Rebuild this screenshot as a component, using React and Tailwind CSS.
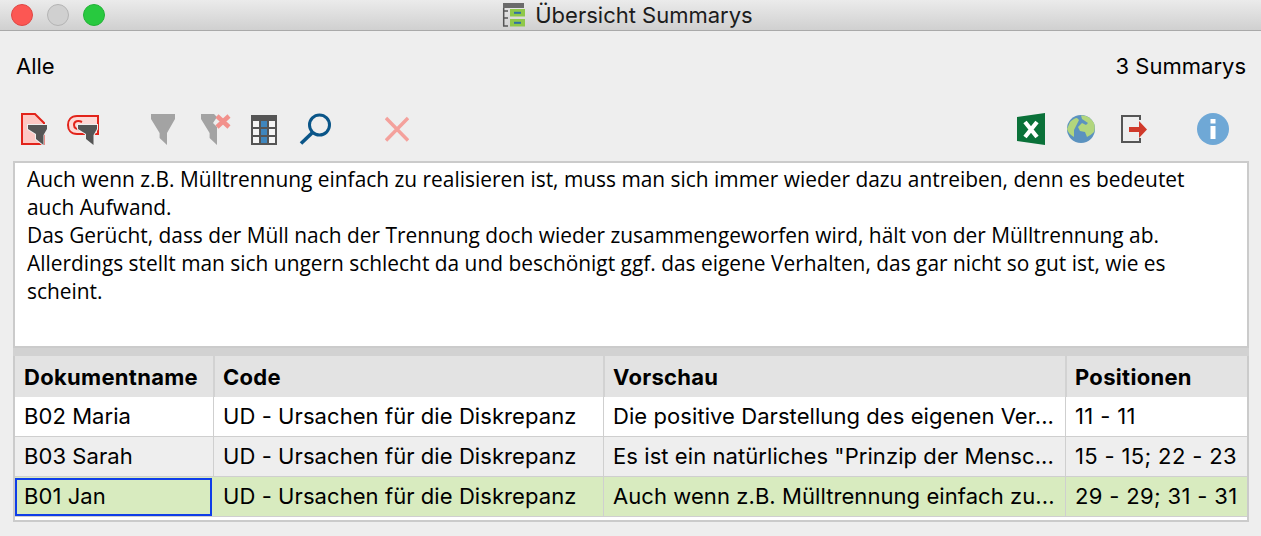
const FUNNEL = "M7 12H26V16L22.5 22V32L15 26V21L7 16Z";

const DocFilter = () => (
  <svg width="26" height="32" viewBox="0 0 26 32" className="ml-[21px]">
    <path d="M1 1H14L23 10V31H1Z" fill="#fcc8c4" stroke="#e2231a" strokeWidth="2" />
    <path d={FUNNEL} fill="#555" stroke="#efefef" strokeWidth="2" paintOrder="stroke" />
  </svg>
);

const MemoFilter = () => (
  <svg width="32" height="32" viewBox="0 0 32 32" className="ml-[20px]">
    <path d="M10 3H31V21H10C4 21 1 17 1 12C1 7 4 3 10 3Z" fill="#fdd9d6" stroke="#e2231a" strokeWidth="2" />
    <path d="M15 9C11 7 7 8 7 12C7 15 10 17 14 16" fill="none" stroke="#e2231a" strokeWidth="2" />
    <g transform="translate(4 0)">
      <path d={FUNNEL} fill="#555" stroke="#efefef" strokeWidth="2" paintOrder="stroke" />
    </g>
  </svg>
);

const GrayFunnel = () => (
  <svg width="24" height="32" viewBox="0 0 24 32" className="ml-[52px]">
    <path d="M0 1H24V6L16 20V32L8.6 25V20L0 6Z" fill="#a3a3a3" />
  </svg>
);

const GrayFunnelX = () => (
  <svg width="30" height="32" viewBox="0 0 30 32" className="ml-[26px]">
    <path d="M0 1H13L16 4L12 10L16 14V32L8.6 25V20L0 6Z" fill="#a3a3a3" />
    <path d="M16 3L28 14M28 3L16 14" stroke="#f2918c" strokeWidth="4.5" />
  </svg>
);

const TableIcon = () => (
  <svg width="26" height="32" viewBox="0 0 26 32" className="ml-[20px]">
    <rect y="2" width="26" height="30" fill="#555" />
    {[8, 16, 24].map((y) => (
      <g key={y}>
        <rect x="2" y={y} width="6" height="6" fill="#f5f5f5" />
        <rect x="10" y={y} width="6" height="6" fill="#3f86bd" />
        <rect x="18" y={y} width="6" height="6" fill="#f5f5f5" />
      </g>
    ))}
  </svg>
);

const Search = () => (
  <svg width="33" height="32" viewBox="0 0 33 32" className="ml-[22px]">
    <circle cx="20.5" cy="12" r="10" fill="none" stroke="#0a5588" strokeWidth="3" />
    <path d="M13 20L2 30.5" stroke="#0a5588" strokeWidth="3.6" />
  </svg>
);

const RedX = () => (
  <svg width="24" height="32" viewBox="0 0 24 32" className="ml-[53px]">
    <path d="M1 5L23 27.5M23 5L1 27.5" stroke="#f4a19c" strokeWidth="3.4" />
  </svg>
);

const Excel = () => (
  <svg width="28" height="32" viewBox="0 0 28 32">
    <path d="M0 4L28 0V32L0 28Z" fill="#0a7139" />
    <path d="M8 9L20 24M20 9L8 24" stroke="#fff" strokeWidth="4.2" />
  </svg>
);

const Globe = () => (
  <svg width="28" height="32" viewBox="0 0 28 32" className="ml-[22px]">
    <circle cx="14" cy="16" r="14" fill="#5b92bf" />
    <path d="M3 7C5 5 8 3 10 3L12 5L9 11L7 15V22C3 20 1 17 0 14Z" fill="#b2d67d" transform="translate(0 2)" />
    <path d="M14 2.5C20 2 24 5 27 10C28 14 28 16 27 19C25 21 22 23 20 24L18 19L13 18L11 14L15 10L19 12L21 10L15 6Z" fill="#b2d67d" />
  </svg>
);

const ExitIcon = () => (
  <svg width="26" height="32" viewBox="0 0 26 32" className="ml-[26px]">
    <path d="M19 7V3H1V29H19V25" fill="none" stroke="#555" strokeWidth="2" />
    <path d="M8 14H18V8L26 16.5L18 25V19H8Z" fill="#d03a2b" />
  </svg>
);

const Info = () => (
  <svg width="32" height="32" viewBox="0 0 32 32" className="ml-[50px]">
    <circle cx="16" cy="16" r="16" fill="#6fa8d6" />
    <rect x="13.5" y="6" width="5" height="4.5" fill="#fff" />
    <rect x="13.5" y="13" width="5" height="13" fill="#fff" />
  </svg>
);

const TitleIcon = () => (
  <svg width="23" height="24" viewBox="0 0 23 24">
    <rect x="1" y="0" width="21" height="5" fill="#6b6b6b" />
    <path d="M1.7 5V23M1 8H6M1 15H6M1 23H6" stroke="#555" strokeWidth="1.5" fill="none" />
    <rect x="8" y="6" width="15" height="7.5" fill="#8fc84a" />
    <rect x="8" y="16" width="15" height="7.5" fill="#8fc84a" />
    <rect x="12" y="8.8" width="7" height="2" fill="#2f6fa5" />
    <rect x="12" y="18.8" width="7" height="2" fill="#2f6fa5" />
  </svg>
);

const rows = [
  { doc: "B02 Maria", prev: "Die positive Darstellung des eigenen Ver...", pos: "11 - 11", bg: "bg-white" },
  { doc: "B03 Sarah", prev: "Es ist ein natürliches \"Prinzip der Mensc...", pos: "15 - 15; 22 - 23", bg: "bg-[#eeeeee]" },
  { doc: "B01 Jan", prev: "Auch wenn z.B. Mülltrennung einfach zu...", pos: "29 - 29; 31 - 31", bg: "bg-[#d8ebbf]", sel: true },
];

const cols = "grid grid-cols-[199px_390px_462px_181px]";
const headCols = "grid grid-cols-[200px_390px_462px_180px]";

export default function App() {
  return (
    <div className="w-[1261px] h-[536px] overflow-hidden bg-[#eeeeee] text-black font-['Inter','Liberation_Sans',sans-serif] text-[22px]">
      <div className="relative h-[31px] flex items-center justify-center gap-[10px] bg-gradient-to-b from-[#ebebeb] to-[#d0d0d0] border-b border-[#a9a9a9] pr-[6px]">
        <div className="absolute left-[11px] top-[4px] flex gap-[14px]">
          <span className="w-[22px] h-[22px] rounded-full bg-[#fc5753] border border-[#df4744]" />
          <span className="w-[22px] h-[22px] rounded-full bg-[#d0d0d0] border border-[#b4b4b4]" />
          <span className="w-[22px] h-[22px] rounded-full bg-[#28c93f] border border-[#22b236]" />
        </div>
        <TitleIcon />
        <span className="text-[#1c1c1c] leading-none">Übersicht Summarys</span>
      </div>

      <div className="flex justify-between items-center h-[24px] mt-[23px] pl-[16px] pr-[15px]">
        <span>Alle</span>
        <span>3 Summarys</span>
      </div>

      <div className="flex items-center h-[32px] mt-[35px]">
        <DocFilter />
        <MemoFilter />
        <GrayFunnel />
        <GrayFunnelX />
        <TableIcon />
        <Search />
        <RedX />
        <div className="ml-auto flex items-center pr-[32px]">
          <Excel />
          <Globe />
          <ExitIcon />
          <Info />
        </div>
      </div>

      <div className="mx-[13px] mt-[16px] h-[187px] w-[1236px] border-2 border-[#cbcbcb] bg-white pl-[12px] pr-[12px] pt-[2px] font-['Open_Sans','Liberation_Sans',sans-serif] text-[20.9px] leading-[28px]">
        <p>Auch wenn z.B. Mülltrennung einfach zu realisieren ist, muss man sich immer wieder dazu antreiben, denn es bedeutet<br />auch Aufwand.</p>
        <p>Das Gerücht, dass der Müll nach der Trennung doch wieder zusammengeworfen wird, hält von der Mülltrennung ab.</p>
        <p>Allerdings stellt man sich ungern schlecht da und beschönigt ggf. das eigene Verhalten, das gar nicht so gut ist, wie es<br />scheint.</p>
      </div>

      <div className="h-[8px] mx-[13px] w-[1236px] bg-[#d2d2d2]" />

      <div className="mx-[13px] w-[1236px] h-[166px] border-2 border-t-0 border-[#cbcbcb] bg-white">
        <div className={`${headCols} h-[41px] bg-[#e3e3e3] font-bold tracking-[0.3px]`}>
          {["Dokumentname", "Code", "Vorschau", "Positionen"].map((h, i) => (
            <div key={h} className={`flex items-center pt-[2px] ${i > 0 ? "pl-[8px]" : "pl-[9px]"} ${i < 3 ? "border-r-2 border-[#d2d2d2]" : ""}`}>{h}</div>
          ))}
        </div>
        {rows.map((r) => (
          <div key={r.doc} className={`${cols} h-[39px] mb-[1px] ${r.bg} shadow-[0_1px_0_#cfcfcf] tracking-[0.07px] whitespace-nowrap`}>
            {r.sel ? (
              <div className="flex items-center border-2 border-[#0f3ee8] pl-[7px] mr-[2px] my-[0.5px]">{r.doc}</div>
            ) : (
              <div className="flex items-center border-r border-[#cfcfcf] pl-[9px]">{r.doc}</div>
            )}
            <div className="flex items-center pl-[9px] border-r border-[#cfcfcf]">UD - Ursachen für die Diskrepanz</div>
            <div className="flex items-center pl-[9px] border-r border-[#cfcfcf]">{r.prev}</div>
            <div className="flex items-center pl-[9px] tracking-[0.35px]">{r.pos}</div>
          </div>
        ))}
      </div>
    </div>
  );
}
